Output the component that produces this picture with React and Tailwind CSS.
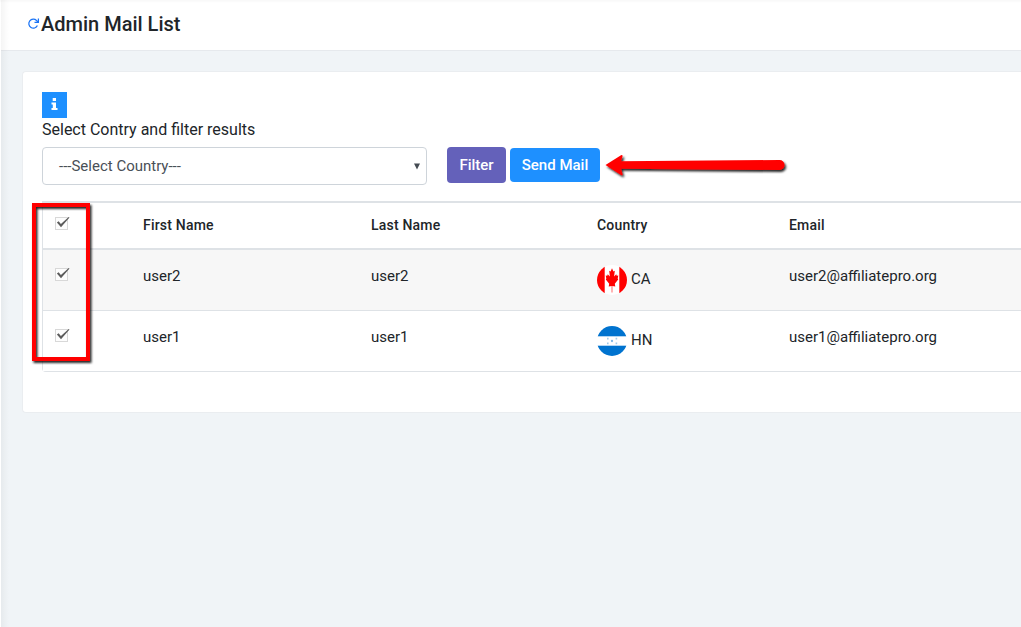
import React from 'react';

function Checkbox() {
  return (
    <svg className="block h-4 w-4 overflow-visible" viewBox="0 0 16 16" fill="none">
      <rect x="0.5" y="3.5" width="12" height="12" fill="#fdfdfd" stroke="#d8d8d8" />
      <path d="M1.900 8.400 3.600 7.300 5.900 9.900 13.700 3 14.500 3.400 6 13.200Z" fill="#5c5c5c" />
    </svg>
  );
}

function CanadaFlag() {
  return (
    <svg className="h-[30px] w-[30px] shrink-0" viewBox="0 0 30 30">
      <defs>
        <clipPath id="ca-clip"><circle cx="15" cy="15" r="15" /></clipPath>
      </defs>
      <g clipPath="url(#ca-clip)">
        <rect width="30" height="30" fill="#fff" />
        <rect width="7.7" height="30" fill="#f00" />
        <rect x="22.3" width="7.7" height="30" fill="#f00" />
        <path d="M15 3.200 13.600 6.400 12.200 5.800 12.900 11.400 10.700 9.200 10.300 10.800 8.700 10.500 9.300 13.600 8.800 14.600 12.200 18.800 11.700 21.500 14.700 21V27.500h.6V21L18.300 21.500 17.800 18.800 21.200 14.600 20.700 13.600 21.300 10.500 19.700 10.800 19.300 9.200 17.100 11.400 17.800 5.800 16.400 6.400Z" fill="#f00" />
      </g>
    </svg>
  );
}

function HondurasFlag() {
  return (
    <svg className="h-[30px] w-[30px] shrink-0" viewBox="0 0 30 30">
      <defs>
        <clipPath id="hn-clip"><circle cx="15" cy="15" r="15" /></clipPath>
      </defs>
      <g clipPath="url(#hn-clip)">
        <rect width="30" height="30" fill="#fff" />
        <rect width="30" height="10.3" fill="#0073cf" />
        <rect y="19.700" width="30" height="10.300" fill="#0073cf" />
        <g fill="#83b9e6">
          <circle cx="15" cy="15" r="1.150" />
          <path d="M10 11.800h1.600v1.700H10ZM18.600 11.800h1.600v1.700h-1.600ZM10 16.500h1.600v1.700H10ZM18.600 16.500h1.600v1.700h-1.600Z" opacity=".75" />
        </g>
      </g>
    </svg>
  );
}

const rows = [
  { name: 'user2', code: 'CA', email: 'user2@affiliatepro.org', Flag: CanadaFlag, tone: 'bg-[#f7f7f7]' },
  { name: 'user1', code: 'HN', email: 'user1@affiliatepro.org', Flag: HondurasFlag, tone: 'bg-white' },
];

function MailTable() {
  return (
    <div className="mt-4 rounded-bl border-b border-l border-[#dee2e6] text-[#212529]">
      <div className="grid h-[49px] grid-cols-[100px_228px_226px_192px_1fr] items-center border-y-2 border-[#dee2e6] pb-px text-sm font-medium tracking-[0.2px]">
        <div className="-mt-[7px] pl-3"><Checkbox /></div>
        <div>First Name</div>
        <div>Last Name</div>
        <div>Country</div>
        <div>Email</div>
      </div>
      {rows.map(({ name, code, email, Flag, tone }, i) => (
        <div
          key={name}
          className={`grid grid-cols-[100px_228px_226px_192px_1fr] pt-[15px] text-[15px] leading-[22px] ${tone} ${i === 0 ? 'h-[61px] border-b border-[#dee2e6]' : 'h-[60px]'}`}
        >
          <div className="pl-3"><Checkbox /></div>
          <div>{name}</div>
          <div>{name}</div>
          <div className="flex gap-1"><Flag /><span className="pt-[3px]">{code}</span></div>
          <div>{email}</div>
        </div>
      ))}
    </div>
  );
}

export default function App() {
  return (
    <div className="relative h-[627px] w-[1021px] overflow-hidden bg-[#f0f4f7] font-[Roboto,sans-serif] text-[#212529]">
      <header className="flex h-[51px] items-center border-b border-[#e6e9ed] bg-white pb-[3px] pl-[27px]">
        <svg className="h-[13px] w-[13px] shrink-0" viewBox="0 0 13 13" fill="none">
          <path d="M10.400 8.600A4.500 4.500 0 1 1 9.500 3.500L11 5" stroke="#1b74f5" strokeWidth="1.250" />
          <path d="M11.400 1.500V5.300H7.500" stroke="#1b74f5" strokeWidth="1.250" />
        </svg>
        <h1 className="ml-px text-[20px] font-medium leading-6 text-[#212529]">Admin Mail List</h1>
      </header>

      <main className="pl-[22px] pt-[20px]">
        <section className="h-[342px] rounded-l border border-r-0 border-[#eaedf0] bg-white pl-[19px] pt-5">
          <div className="flex h-[26px] w-[25px] items-center justify-center bg-[#1e90ff] pb-0.5">
            <svg className="h-[12px] w-[7px]" viewBox="0 0 7 12" fill="#fff">
              <path d="M1.700 0H5V3H1.700ZM.5 4.500H5V10H6.500V12H.5V10H1.800V6.500H.5Z" />
            </svg>
          </div>
          <p className="h-6 text-base leading-[23px]">Select Contry and filter results</p>
          <div className="mt-[5px] flex h-[38px]">
            <div className="flex h-[38px] w-[385px] items-center justify-between rounded border border-[#ced4da] pl-4 pr-[6px] text-[15px] text-[#495057]">
              <span>---Select Country---</span>
              <svg className="h-[7px] w-[6px]" viewBox="0 0 6 7"><path d="M0 .5H6L3 6.500Z" fill="#444b52" /></svg>
            </div>
            <button className="ml-5 h-9 w-[59px] rounded bg-[#6461ba] text-[15px] font-medium text-white">Filter</button>
            <button className="ml-1 mt-px h-[34px] w-[90px] rounded bg-[#1e90ff] text-[15px] font-medium text-white">Send Mail</button>
          </div>
          <MailTable />
        </section>
      </main>

      <div className="absolute left-0 top-0 h-full w-px bg-white" />
      <div className="absolute left-px top-0 h-full w-2 bg-gradient-to-r from-black/4 to-transparent" />
      <div className="absolute left-0 top-0 h-[3px] w-full bg-gradient-to-b from-black/3 to-transparent" />

      <svg className="absolute left-0 top-0 h-full w-full" viewBox="0 0 1021 627" fill="none">
        <defs>
          <filter id="mark-shadow" filterUnits="userSpaceOnUse" x="0" y="130" width="850" height="260">
            <feDropShadow dx="1.500" dy="2" stdDeviation="1.300" floodColor="#000" floodOpacity="0.85" />
          </filter>
        </defs>
        <g filter="url(#mark-shadow)">
          <rect x="34" y="205" width="54" height="154" stroke="#f00" strokeWidth="4" />
          <path d="M605.500 165 621 155.300Q622.800 154.500 622.500 156.500L621 161.300 779.500 160A4.900 4.900 0 0 1 779.500 170L621 168.800 622.500 174Q622.800 176 621 175Z" fill="#f00" />
        </g>
      </svg>
    </div>
  );
}
